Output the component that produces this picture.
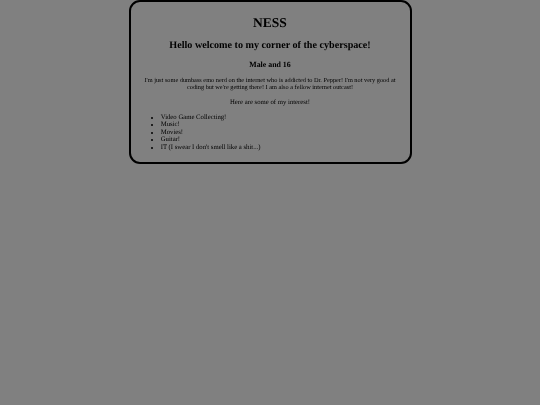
<style>
:global(body) { margin: 0; background: #808080; }
.card {
  box-sizing: border-box;
  width: 283px;
  margin: 0 auto;
  padding: 3.75px 12.6px 3.8px;
  border: 2.5px solid #000;
  border-radius: 11px;
  font-family: "Liberation Serif", "Times New Roman", serif;
  font-size: 6.72px;
  line-height: 7.56px;
  color: #000;
  text-rendering: geometricPrecision;
  filter: blur(0.35px);
}
h1, h2, h3, p { text-align: center; }
h1 { font-size: 13.5px; line-height: 15.5px; margin: 9px 0 9.9px; }
h2 { font-size: 10.15px; line-height: 11.6px; margin: 8.4px 0 8.8px; }
h3 { font-size: 7.86px; line-height: 7.98px; margin: 7.86px 0 8.4px; }
p { margin: 6.72px 0; }
.intro { font-size: 6.3px; line-height: 7.3px; margin-bottom: 7.7px; }
ul { margin: 6.9px 0 6.72px; padding: 0 0 0 17.6px; }
</style>

<div class="card">
  <h1>NESS</h1>
  <h2>Hello welcome to my corner of the cyberspace!</h2>
  <h3>Male and 16</h3>
  <p class="intro">I'm just some dumbass emo nerd on the internet who is addicted to Dr. Pepper! I'm not very good at coding but we're getting there! I am also a fellow internet outcast!</p>
  <p>Here are some of my interest!</p>
  <ul>
    <li>Video Game Collecting!</li>
    <li>Music!</li>
    <li>Movies!</li>
    <li>Guitar!</li>
    <li>IT (I swear I don't smell like a shit...)</li>
  </ul>
</div>
